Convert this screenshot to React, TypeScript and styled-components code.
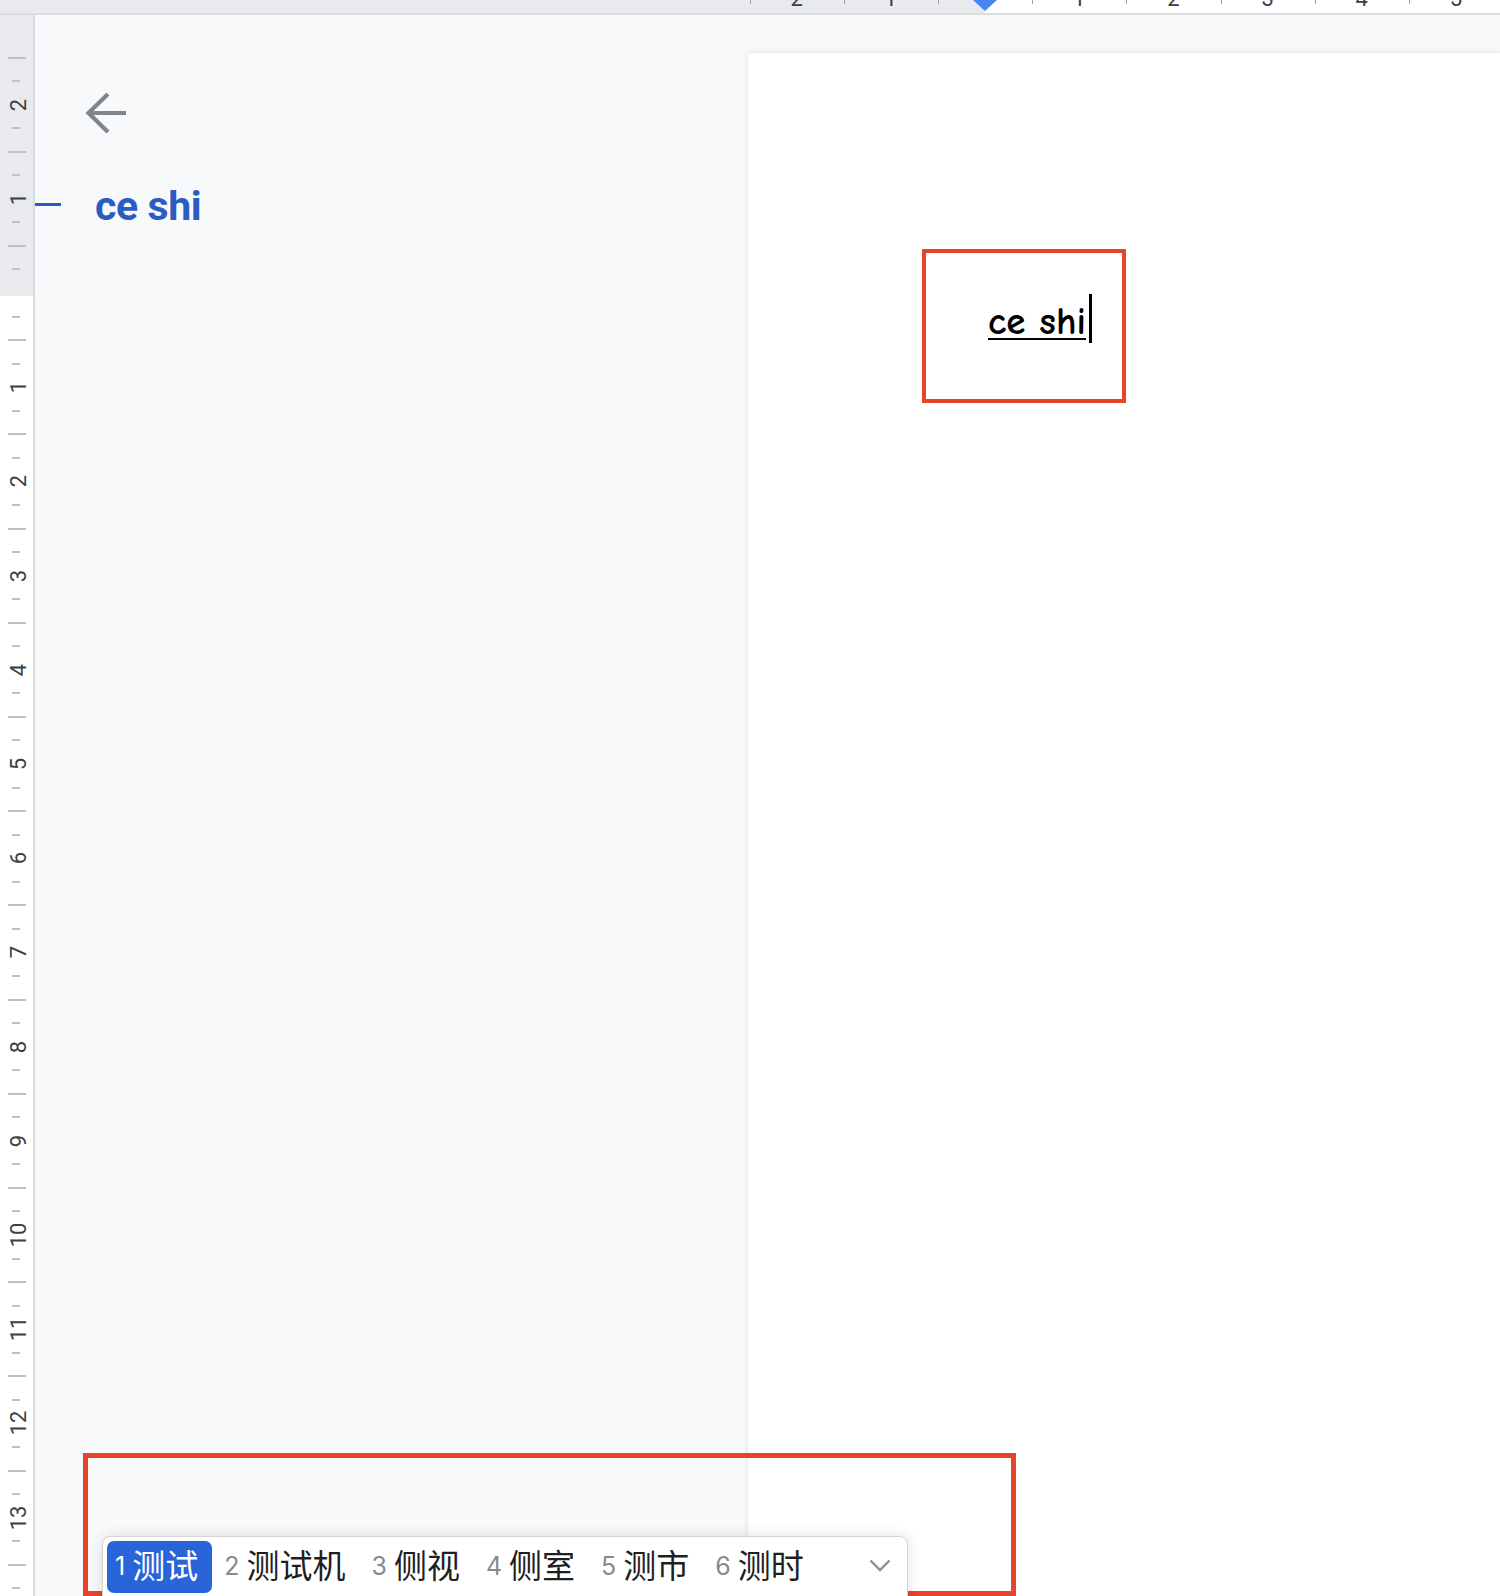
import React from 'react';
import styled, { createGlobalStyle } from 'styled-components';

const INCH = 94.2;
const QUARTER = INCH / 4;
const V_ORIGIN = 293;
const H_ORIGIN = 985;

const GlobalStyle = createGlobalStyle`
  html, body {
    margin: 0;
    padding: 0;
    background: #f8f9fa;
  }
  body {
    overflow: hidden;
    font-family: Roboto, "Noto Sans", sans-serif;
  }
`;

const Screen = styled.div`
  position: relative;
  width: 1500px;
  height: 1596px;
  overflow: hidden;
  display: flex;
  flex-direction: column;
  background: #f8f9fa;
`;

/* ---------- top ruler ---------- */

const TopRuler = styled.div`
  position: relative;
  flex: 0 0 13px;
  display: flex;
  border-bottom: 2px solid #dadce0;
  overflow: hidden;
`;

const RulerMargin = styled.div`
  width: ${H_ORIGIN}px;
  background: #e8eaed;
`;

const RulerText = styled.div`
  flex: 1;
  background: #ffffff;
`;

const HTick = styled.span`
  position: absolute;
  top: 0;
  width: 1px;
  height: 4px;
  background: #9aa0a6;
`;

const HNumber = styled.span`
  position: absolute;
  top: -12px;
  transform: translateX(-50%);
  font-size: 22px;
  line-height: 22px;
  color: #3c4043;
`;

const IndentMarker = styled.span`
  position: absolute;
  top: 0;
  left: ${H_ORIGIN - 12}px;
  width: 0;
  height: 0;
  border-left: 12px solid transparent;
  border-right: 12px solid transparent;
  border-top: 11px solid #4a86f0;
`;

/* ---------- body ---------- */

const Body = styled.div`
  flex: 1;
  display: flex;
  min-height: 0;
`;

const LeftRuler = styled.div`
  position: relative;
  flex: 0 0 33px;
  display: flex;
  flex-direction: column;
  background: #ffffff;
  border-right: 2px solid #dadce0;
`;

const VMargin = styled.div`
  height: ${V_ORIGIN + 3 - 15}px;
  background: #e8eaed;
`;

const VTick = styled.span<{ $long?: boolean }>`
  position: absolute;
  left: ${({ $long }) => ($long ? 8 : 12)}px;
  width: ${({ $long }) => ($long ? 18 : 8)}px;
  height: 2px;
  margin-top: -1px;
  background: #bdc1c6;
`;

const VNumber = styled.span`
  position: absolute;
  left: 19px;
  font-size: 22px;
  line-height: 22px;
  color: #3c4043;
  transform: translate(-50%, -50%) rotate(-90deg);
  white-space: nowrap;
`;

const Main = styled.div`
  flex: 1;
  display: flex;
`;

const Sidebar = styled.div`
  flex: 0 0 713px;
  display: flex;
  flex-direction: column;
  align-items: flex-start;
  padding-top: 76px;
`;

const BackButton = styled.button`
  margin-left: 49px;
  width: 44px;
  height: 44px;
  padding: 0;
  border: none;
  background: transparent;
  color: #80868b;
  cursor: pointer;
`;

const OutlineItem = styled.div`
  display: flex;
  align-items: center;
  margin-top: 47px;
`;

const OutlineDash = styled.span`
  width: 26px;
  height: 3px;
  background: #2b5cc4;
  margin-right: 34px;
  margin-bottom: 4px;
`;

const OutlineText = styled.span`
  font-family: Roboto, "Noto Sans", sans-serif;
  font-size: 41px;
  line-height: 48px;
  font-weight: 700;
  letter-spacing: -0.4px;
  color: #2b5cc4;
`;

const Page = styled.div`
  flex: 1;
  margin-top: 38px;
  background: #ffffff;
  box-shadow: 0 0 6px rgba(60, 64, 67, 0.14);
`;

const MarkedBox = styled.div`
  box-sizing: border-box;
  margin: 196px 0 0 174px;
  width: 204px;
  height: 154px;
  border: 4px solid #e8442b;
  padding: 41px 0 0 62px;
`;

const TypedText = styled.span`
  font-family: "Comic Sans MS", "Comic Neue", "Noto Sans", sans-serif;
  font-size: 39px;
  line-height: 50px;
  font-weight: 600;
  color: #000000;
  text-decoration: underline;
  text-decoration-thickness: 2px;
  text-underline-offset: 4px;
`;

const Caret = styled.span`
  display: inline-block;
  width: 3px;
  height: 49px;
  margin-left: 3px;
  background: #000000;
  vertical-align: -9px;
`;

/* ---------- IME candidate window ---------- */

const CandidateBar = styled.div`
  position: absolute;
  left: 102px;
  top: 1536px;
  width: 806px;
  height: 80px;
  box-sizing: border-box;
  padding: 4px;
  display: flex;
  align-items: flex-start;
  background: #ffffff;
  border: 1px solid #d4d4d4;
  border-radius: 8px;
  box-shadow: 0 0 14px rgba(0, 0, 0, 0.12);
  font-family: "Noto Sans CJK SC", "Noto Sans", sans-serif;
`;

const Candidate = styled.div<{ $active?: boolean }>`
  display: flex;
  align-items: center;
  gap: 7px;
  height: 52px;
  padding: 0 14px 0 8px;
  margin-right: 4px;
  border-radius: 7px;
  background: ${({ $active }) => ($active ? '#2a64d9' : 'transparent')};
`;

const CandidateIndex = styled.span<{ $active?: boolean }>`
  font-family: Inter, "Noto Sans", sans-serif;
  font-size: 25px;
  line-height: 30px;
  color: ${({ $active }) => ($active ? '#ffffff' : '#8a8a8a')};
  margin-top: -2px;
`;

const CandidateWord = styled.span<{ $active?: boolean }>`
  font-size: 33px;
  line-height: 40px;
  margin-top: -7px;
  color: ${({ $active }) => ($active ? '#ffffff' : '#1f1f1f')};
`;

const ExpandButton = styled.span`
  margin-left: auto;
  margin-right: 12px;
  height: 48px;
  display: flex;
  align-items: center;
  color: #8e8e8e;
`;

const Annotation = styled.div`
  position: absolute;
  left: 83px;
  top: 1453px;
  width: 933px;
  height: 143px;
  box-sizing: border-box;
  border: 5px solid #e8442b;
  pointer-events: none;
`;

const candidates = ['测试', '测试机', '侧视', '侧室', '测市', '测时'];

const topLabels = [-2, -1, 1, 2, 3, 4, 5];

export default function App() {
  const hTicks: number[] = [];
  for (let k = -5; k <= 11; k += 2) hTicks.push(H_ORIGIN + (k * INCH) / 2);

  const vMarks: { y: number; kind: 'short' | 'long' | 'num'; label?: number }[] = [];
  for (let k = -10; k <= 56; k++) {
    if (k === 0) continue;
    const y = V_ORIGIN + k * QUARTER;
    const m = ((k % 4) + 4) % 4;
    if (m === 0) vMarks.push({ y, kind: 'num', label: Math.abs(k / 4) });
    else vMarks.push({ y, kind: m === 2 ? 'long' : 'short' });
  }

  return (
    <>
      <GlobalStyle />
      <Screen>
        <TopRuler>
          <RulerMargin />
          <RulerText />
          {hTicks.map((x) => (
            <HTick key={x} style={{ left: x }} />
          ))}
          {topLabels.map((n) => (
            <HNumber key={n} style={{ left: H_ORIGIN + n * INCH }}>
              {Math.abs(n)}
            </HNumber>
          ))}
          <IndentMarker />
        </TopRuler>

        <Body>
          <LeftRuler>
            <VMargin />
            {vMarks.map((m) =>
              m.kind === 'num' ? (
                <VNumber key={m.y} style={{ top: m.y - 15 }}>
                  {m.label}
                </VNumber>
              ) : (
                <VTick key={m.y} $long={m.kind === 'long'} style={{ top: m.y - 15 }} />
              )
            )}
          </LeftRuler>

          <Main>
            <Sidebar>
              <BackButton aria-label="Back">
                <svg width="44" height="44" viewBox="0 0 44 44" fill="none">
                  <path
                    d="M24 3L4.5 22L24 41M5 22H42"
                    stroke="currentColor"
                    strokeWidth="4.2"
                    strokeLinejoin="miter"
                  />
                </svg>
              </BackButton>
              <OutlineItem>
                <OutlineDash />
                <OutlineText>ce shi</OutlineText>
              </OutlineItem>
            </Sidebar>

            <Page>
              <MarkedBox>
                <TypedText>ce shi</TypedText>
                <Caret />
              </MarkedBox>
            </Page>
          </Main>
        </Body>

        <Annotation />

        <CandidateBar>
          {candidates.map((word, i) => (
            <Candidate key={word} $active={i === 0}>
              <CandidateIndex $active={i === 0}>{i + 1}</CandidateIndex>
              <CandidateWord $active={i === 0}>{word}</CandidateWord>
            </Candidate>
          ))}
          <ExpandButton>
            <svg width="22" height="13" viewBox="0 0 22 13" fill="none">
              <path d="M1.5 1.5L11 11L20.5 1.5" stroke="currentColor" strokeWidth="2.4" />
            </svg>
          </ExpandButton>
        </CandidateBar>
      </Screen>
    </>
  );
}
